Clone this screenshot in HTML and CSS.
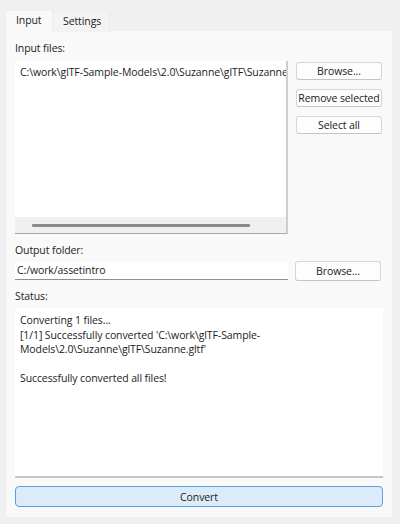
FILE: index.html
```html
<!DOCTYPE html>
<html>
<head>
<meta charset="utf-8">
<link rel="stylesheet" href="styles.css">
</head>
<body>
<div class="window">
  <div class="tabs">
    <div class="tab active">Input</div>
    <div class="tab">Settings</div>
  </div>
  <div class="pane">
    <div class="label">Input files:</div>
    <div class="row files">
      <div class="listbox">
        <div class="list-items">
          <div class="item">C:\work\glTF-Sample-Models\2.0\Suzanne\glTF\Suzanne.gltf</div>
        </div>
        <div class="hscroll"><div class="thumb"></div></div>
      </div>
      <div class="btncol">
        <button class="btn">Browse...</button>
        <button class="btn">Remove selected</button>
        <button class="btn">Select all</button>
      </div>
    </div>
    <div class="label out">Output folder:</div>
    <div class="row outrow">
      <div class="field">C:/work/assetintro</div>
      <button class="btn">Browse...</button>
    </div>
    <div class="label status">Status:</div>
    <div class="statusbox">
      <div>Converting 1 files...</div>
      <div>[1/1] Successfully converted 'C:\work\glTF-Sample-</div>
      <div>Models\2.0\Suzanne\glTF\Suzanne.gltf'</div>
      <div>&nbsp;</div>
      <div>Successfully converted all files!</div>
    </div>
    <button class="convert">Convert</button>
  </div>
</div>
</body>
</html>
```
FILE: styles.css
```css
html, body {
  margin: 0;
  padding: 0;
  background: #f0f0f0;
}
body {
  width: 400px;
  height: 524px;
  font-family: "Open Sans", "Noto Sans", sans-serif;
  font-size: 10.5px;
  letter-spacing: -0.1px;
  color: #1b1b1b;
}
.window {
  padding: 11px 8px 0 6px;
}
.tabs {
  display: flex;
  height: 20px;
}
.tab {
  height: 20px;
  line-height: 19px;
  padding: 0 10px;
  background: #f3f3f3;
  border-right: 1px solid #ececec;
  box-sizing: border-box;
}
.tab.active {
  background: #f9f9f9;
  width: 47px;
}
.tab:not(.active) {
  margin-top: 1px;
  width: 57px;
}
.pane {
  background: #f9f9f9;
  height: 486px;
  box-sizing: border-box;
  padding: 7px 9px 10px 9px;
  display: flex;
  flex-direction: column;
}
.label {
  height: 20px;
  line-height: 20px;
  margin-bottom: 3px;
}
.label.out {
  margin-top: 6px;
  margin-bottom: 2px;
}
.label.status {
  margin-top: 5px;
  margin-bottom: 2px;
}
.row {
  display: flex;
}
.files {
  height: 173px;
}
.listbox {
  width: 273px;
  height: 173px;
  background: #fff;
  box-sizing: border-box;
  border-right: 2px solid #cdcdcd;
  border-bottom: 1px solid #a8a8a8;
  display: flex;
  flex-direction: column;
  overflow: hidden;
}
.list-items {
  flex: 1;
  padding: 3px 0 0 5px;
  white-space: nowrap;
  overflow: hidden;
}
.item {
  line-height: 16px;
}
.hscroll {
  height: 16px;
  background: #f0f0f0;
  display: flex;
  align-items: center;
  padding-left: 17px;
}
.thumb {
  width: 218px;
  height: 3px;
  background: #8a8a8a;
  border-radius: 1px;
}
.btncol {
  display: flex;
  flex-direction: column;
  gap: 9px;
  margin-left: 8px;
  margin-top: 1px;
}
.btn {
  width: 86px;
  height: 18px;
  padding: 0;
  font: inherit;
  letter-spacing: inherit;
  color: #1b1b1b;
  background: #fdfdfd;
  border: 1px solid #d6d6d6;
  border-bottom-color: #c4c4c4;
  border-radius: 3px;
  line-height: 16px;
  white-space: nowrap;
}
.outrow {
  height: 19px;
  align-items: flex-start;
}
.outrow .btn {
  margin-left: 7px;
  margin-top: -1px;
  height: 20px;
}
.field {
  width: 273px;
  height: 18px;
  line-height: 17px;
  box-sizing: border-box;
  background: #fff;
  border-bottom: 1px solid #8d8d8d;
  padding-left: 2px;
}
.statusbox {
  height: 172px;
  box-sizing: border-box;
  background: #fff;
  border-bottom: 2px solid #c6c6c6;
  padding: 5px 0 0 5px;
  line-height: 14.5px;
}
.convert {
  margin-top: 8px;
  height: 21px;
  width: 368px;
  padding: 0;
  font: inherit;
  letter-spacing: inherit;
  color: #1b1b1b;
  background: #dcebf9;
  border: 1px solid #5b9fe0;
  border-radius: 4px;
}
```
